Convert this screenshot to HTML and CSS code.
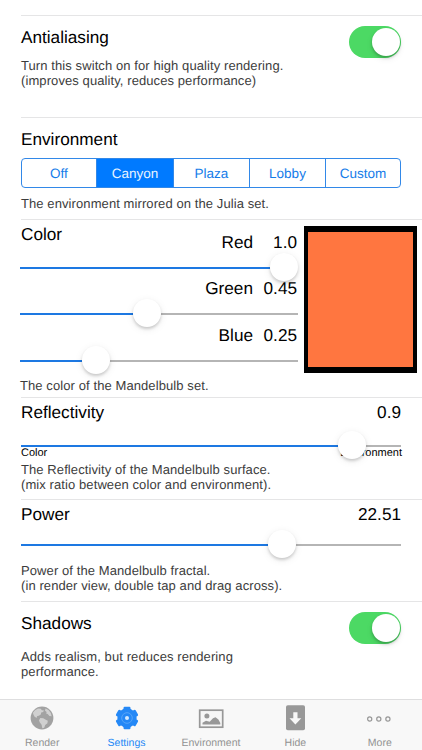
FILE: index.html
```html
<!DOCTYPE html>
<html lang="en">
<head>
<meta charset="utf-8">
<title>Settings</title>
<link rel="stylesheet" href="styles.css">
</head>
<body>
<main class="settings">
  <section class="group antialiasing">
    <div class="head"><h2>Antialiasing</h2><span class="switch"><i></i></span></div>
    <p class="note">Turn this switch on for high quality rendering.<br>(improves quality, reduces performance)</p>
  </section>

  <section class="group environment">
    <h2>Environment</h2>
    <div class="segments"><span>Off</span><span class="selected">Canyon</span><span>Plaza</span><span>Lobby</span><span>Custom</span></div>
    <p class="note">The environment mirrored on the Julia set.</p>
  </section>

  <section class="group color">
    <div class="mixer">
      <div class="channels">
        <h2>Color</h2>
        <div class="channel red">
          <div class="reading"><span>Red</span><b>1.0</b></div>
          <div class="slider"><span class="fill" style="width:250px"></span><span class="thumb"></span><span class="rest"></span></div>
        </div>
        <div class="channel green">
          <div class="reading"><span>Green</span><b>0.45</b></div>
          <div class="slider"><span class="fill" style="width:113px"></span><span class="thumb"></span><span class="rest"></span></div>
        </div>
        <div class="channel blue">
          <div class="reading"><span>Blue</span><b>0.25</b></div>
          <div class="slider"><span class="fill" style="width:62px"></span><span class="thumb"></span><span class="rest"></span></div>
        </div>
      </div>
      <div class="swatch"></div>
    </div>
    <p class="note">The color of the Mandelbulb set.</p>
  </section>

  <section class="group reflectivity">
    <div class="head"><h2>Reflectivity</h2><span class="value">0.9</span></div>
    <div class="slider"><span class="fill" style="width:317px"></span><span class="thumb"></span><span class="rest"></span></div>
    <div class="ends"><span>Color</span><span>Environment</span></div>
    <p class="note">The Reflectivity of the Mandelbulb surface.<br>(mix ratio between color and environment).</p>
  </section>

  <section class="group power">
    <div class="head"><h2>Power</h2><span class="value">22.51</span></div>
    <div class="slider"><span class="fill" style="width:247px"></span><span class="thumb"></span><span class="rest"></span></div>
    <p class="note">Power of the Mandelbulb fractal.<br>(in render view, double tap and drag across).</p>
  </section>

  <section class="group shadows">
    <div class="head"><h2>Shadows</h2><span class="switch"><i></i></span></div>
    <p class="note">Adds realism, but reduces rendering<br>performance.</p>
  </section>
</main>

<nav class="tabs">
  <a class="tab">
    <svg width="26" height="26" viewBox="0 0 26 26"><circle cx="13" cy="13" r="11.4" fill="#a2a2a2"/><path fill="#d0d0d0" d="M6 5.2 9 3.5l2.800.3 1 1.400 2.200.2-.9 1.700-1.900.5-.4 2-2 1.200-1.900.4.2 1.500-2.300-.8-1.300-2.100-.6-2zM11.300 13l3 .2 2.500 1.600 2 .9-.4 2.500-2.200 1.800-1 2.700-1.900.5-.7-3.500-1.900-2.400-.7-2.100zM16.500 3.500l3 1.500 2.300 3 .9 3.300-2.300-.3-1.700-1.900-1.600-.5.6-1.700-1.700-1.200z"/></svg>
    <span>Render</span>
  </a>
  <a class="tab active">
    <svg width="26" height="26" viewBox="0 0 26 26"><g fill="#2488f6"><circle cx="13" cy="13" r="9.700"/><rect x="9.500" y="1.700" width="7" height="22.600" rx="1.200"/><rect x="9.500" y="1.700" width="7" height="22.600" rx="1.200" transform="rotate(60 13 13)"/><rect x="9.500" y="1.700" width="7" height="22.600" rx="1.200" transform="rotate(120 13 13)"/></g><circle cx="13" cy="13" r="5.300" fill="none" stroke="#55a4f9" stroke-width="1"/><circle cx="13" cy="13" r="2" fill="#d4e9ff"/></svg>
    <span>Settings</span>
  </a>
  <a class="tab">
    <svg width="26" height="26" viewBox="0 0 26 26"><rect x="1.700" y="5.200" width="23" height="17" fill="#f6f6f6" stroke="#989898" stroke-width="1.700"/><circle cx="8.900" cy="10.900" r="2.500" fill="#989898"/><path fill="#989898" d="M4.500 19.500v-1.700l3.500-2 3.700.9 3.300-3.500 2.500-.9 2.900 2.100 1.900 3.500v1.600z"/></svg>
    <span>Environment</span>
  </a>
  <a class="tab">
    <svg width="26" height="26" viewBox="0 0 26 26"><rect x="4" y=".3" width="19" height="25" rx="1.800" fill="#989898"/><path fill="#f8f8f8" d="M11.300 7.300h4.200v6h3.800l-5.900 6.300-5.900-6.300h3.800z"/></svg>
    <span>Hide</span>
  </a>
  <a class="tab">
    <svg width="26" height="26" viewBox="0 0 26 26"><g fill="none" stroke="#989898" stroke-width="1.200"><circle cx="2.700" cy="14" r="2.100"/><circle cx="11.800" cy="14" r="2.100"/><circle cx="20.900" cy="14" r="2.100"/></g></svg>
    <span>More</span>
  </a>
</nav>
</body>
</html>
```
FILE: styles.css
```css
* { box-sizing: border-box; }

body {
  margin: 0;
  width: 422px;
  height: 750px;
  overflow: hidden;
  display: flex;
  flex-direction: column;
  background: #fff;
  color: #000;
  font-family: "Liberation Sans", Arial, sans-serif;
  text-rendering: geometricPrecision;
}

.settings { height: 699px; padding: 15px 0 0 21px; }

.group {
  height: 102px;
  padding-right: 21px;
  border-top: 1px solid #e5e5e6;
}

h2, .value, .reading {
  margin: 0;
  font-size: 17.200px;
  font-weight: 400;
  line-height: 20px;
}

.note {
  margin: 0;
  color: #3c3c3c;
  font-size: 13px;
  letter-spacing: .090px;
  line-height: 15px;
  white-space: nowrap;
}

.head { display: flex; justify-content: space-between; align-items: flex-start; }

.switch {
  display: flex;
  justify-content: flex-end;
  width: 52px;
  height: 32px;
  padding: 2px 1.500px;
  border-radius: 16px;
  background: #4cd964;
}
.switch i {
  width: 28px;
  height: 28px;
  border-radius: 50%;
  background: #fff;
  box-shadow: 0 2px 3px rgba(0, 0, 0, .22), 0 3px 7px rgba(0, 0, 0, .07);
}

.antialiasing .head { height: 42px; padding-top: 10px; }
.antialiasing h2 { margin-top: 1px; }
.shadows { height: 98px; }
.shadows .head { height: 47px; padding-top: 10px; }
.shadows h2 { margin-top: 1px; }

.environment h2 { padding-top: 11px; height: 40px; }
.segments {
  display: grid;
  grid-template-columns: 74px 77px 76px 76px 1fr;
  height: 30px;
  border: 1px solid #3288e8;
  border-radius: 4px;
  overflow: hidden;
  color: #147ce9;
  font-size: 13.500px;
  line-height: 29px;
  text-align: center;
}
.segments span + span { border-left: 1px solid #3288e8; }
.segments .selected { background: #007aff; color: #e8f4ff; }
.environment .note { margin-top: 8px; }

.slider { display: flex; align-items: center; height: 2px; }
.fill { height: 2px; background: #1d78e2; }
.thumb {
  flex: none;
  width: 28px;
  height: 28px;
  margin-top: -2px;
  border-radius: 50%;
  background: #fff;
  box-shadow: 0 2px 3px rgba(0, 0, 0, .17), 0 2px 8px rgba(0, 0, 0, .08);
  z-index: 1;
}
.rest { flex: 1; height: 2px; background: #b5b5b5; }

.color { height: 178px; padding-right: 5px; }
.mixer { display: flex; justify-content: space-between; height: 158px; }
.channels { width: 278px; margin-left: -1px; }
.channels h2 { height: 12px; padding: 4px 0 0 1px; }
.channel { height: 46px; }
.channel.green { height: 47px; }
.reading { display: flex; justify-content: flex-end; padding-right: 1px; }
.reading b { width: 44px; font-weight: 400; text-align: right; }
.channel .slider { margin-top: 15px; }
.swatch {
  width: 113px;
  height: 147px;
  margin-top: 6px;
  border: 5px solid #000;
  border-width: 6px 4px;
  background: #ff7640;
}
.color .note { margin-left: -1px; }

.reflectivity .head, .power .head { height: 47px; padding-top: 4px; }
.power .head { height: 44px; }
.ends {
  display: flex;
  justify-content: space-between;
  margin-right: -1px;
  height: 15px;
  font-size: 11px;
  line-height: 12px;
}
.power .note { margin-top: 17px; }

.tabs {
  display: grid;
  grid-template-columns: repeat(5, 1fr);
  height: 51px;
  border-top: 1px solid #dededf;
  background: #f8f8f8;
}
.tab {
  display: flex;
  flex-direction: column;
  align-items: center;
  padding-top: 5px;
  color: #929292;
  font-size: 10.500px;
  line-height: 12px;
}
.tab span { margin-top: 6px; }
.tab.active { color: #2488f6; }
```
